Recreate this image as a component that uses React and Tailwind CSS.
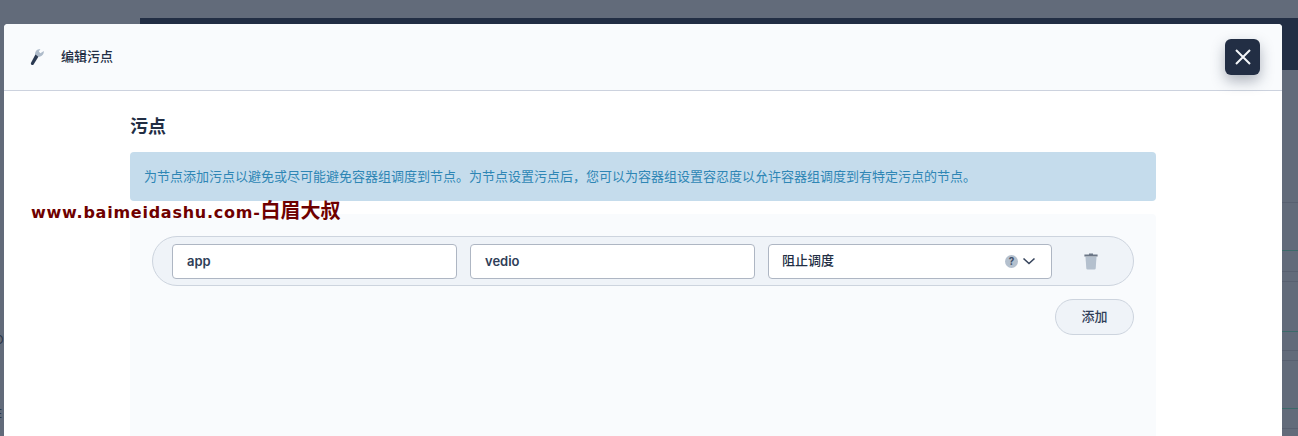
const WrenchIcon = () => (
  <svg width="16" height="20" viewBox="0 0 16 20">
    <path d="M6.2 8 C5.6 4.8 7.8 2 11.4 2 L9.8 4.6 L11.4 6.2 L14.8 4 C15.2 7.4 12.4 10.2 9 9.8 Z" fill="#aebbca" />
    <path d="M6.4 7.6 L9.4 9.8 L4.6 17.6 C3.6 18.8 1.4 17.8 1.9 16 Z" fill="#2b3a52" />
  </svg>
);

const TrashIcon = () => (
  <svg width="14" height="17" viewBox="0 0 14 17">
    <path d="M5 0.5 H9 V1.6 H13.6 V3.4 H0.4 V1.6 H5 Z" fill="#6b7686" />
    <path d="M1.5 4 H12.5 L11.7 15.4 C11.6 16.1 11.2 16.5 10.5 16.5 H3.5 C2.8 16.5 2.4 16.1 2.3 15.4 Z" fill="#b4c0ce" />
  </svg>
);

// the page under the dialog, only its right edge shows past the modal
const PageBehind = () => (
  <div className="flex flex-col pt-[18px]">
    <div className="ml-[140px] h-[52px] bg-[#222e44]" />
    <div className="ml-auto flex w-[16px] flex-col">
      <div className="h-[133px] border-b border-[#586070]" />
      <div className="h-[48px] border-b border-[#3d6a6a]" />
      <div className="h-[21px] border-b border-[#586070]" />
      <div className="h-[10px] border-b border-[#586070]" />
      <div className="h-[50px] border-b border-[#3d6a6a]" />
      <div className="h-[19px] border-b border-[#586070]" />
      <div className="h-[10px] border-b border-[#586070]" />
      <div className="h-[48px] border-b border-[#3d6a6a]" />
      <div className="h-[20px] border-b border-[#586070]" />
    </div>
  </div>
);

const TextBox = ({ value }) => (
  <div className="flex h-[35px] w-[285px] items-center rounded border border-[#aeb6c3] bg-white px-[14px] pt-[2px] text-[13px] font-semibold text-[#2f3e58]">
    {value}
  </div>
);

export default function App() {
  return (
    <div className="relative h-[436px] w-[1298px] overflow-hidden bg-[#626b7a]">
      <PageBehind />

      {/* modal */}
      <div className="absolute left-1 top-6 h-[412px] w-[1278px] rounded-t bg-white font-['Inter','Noto_Sans_CJK_SC',sans-serif]">
        <div className="flex h-[67px] items-center rounded-t border-b border-[#ccd2de] bg-[#f9fbfd] pl-[25px]">
          <WrenchIcon />
          <span className="ml-[16px] text-[13px] font-medium text-[#222e44]">编辑污点</span>
          <button className="ml-auto mr-[22px] flex h-[36px] w-[35px] items-center justify-center rounded-md bg-[#222e44] shadow-[0_6px_14px_rgba(34,46,68,0.35)]">
            <svg width="18" height="18" viewBox="0 0 18 18" fill="none" stroke="#f4f6f9" strokeWidth="2">
              <path d="M2 2 L16 16 M16 2 L2 16" />
            </svg>
          </button>
        </div>

        <div className="px-[126px]">
          <h2 className="mt-[24px] text-[18px] font-semibold leading-[24px] text-[#222e44]">污点</h2>
          <div className="mt-[13px] flex h-[49px] items-center rounded bg-[#c5dcec] px-[14px] text-[13px] text-[#2e86b5]">
            为节点添加污点以避免或尽可能避免容器组调度到节点。为节点设置污点后，您可以为容器组设置容忍度以允许容器组调度到有特定污点的节点。
          </div>

          <div className="mt-[13px] h-[240px] rounded bg-[#f9fbfd] px-[22px] pt-[22px]">
            <div className="flex h-[50px] items-center gap-[13px] rounded-full border border-[#cdd4de] bg-[#eff3f8] pl-[19px]">
              <TextBox value="app" />
              <TextBox value="vedio" />
              <div className="flex h-[35px] w-[284px] items-center rounded border border-[#aeb6c3] bg-white pl-[13px] pr-[15px] text-[13px] font-medium text-[#222e44]">
                阻止调度
                <span className="ml-auto flex h-[13px] w-[13px] items-center justify-center rounded-full bg-[#b4c0ce] text-[10px] font-bold leading-none text-[#40506a]">?</span>
                <svg className="ml-[4px]" width="14" height="14" viewBox="0 0 14 14" fill="none" stroke="#36445c" strokeWidth="1.6">
                  <path d="M1.5 4.5 L7 9.5 L12.5 4.5" />
                </svg>
              </div>
              <span className="ml-[19px] flex">
                <TrashIcon />
              </span>
            </div>
            <div className="mt-[13px] flex justify-end">
              <button className="h-[36px] w-[79px] rounded-full border border-[#cdd4de] bg-[#eff3f8] text-[13px] font-medium text-[#2f3e58]">
                添加
              </button>
            </div>
          </div>
        </div>
      </div>

      {/* scraps of the page behind, showing in the left gutter */}
      <span className="absolute left-[-5px] top-[331px] font-['Inter',sans-serif] text-[12px] text-[#2b3546]">D</span>
      <span className="absolute left-[-5px] top-[405px] font-['Inter',sans-serif] text-[12px] text-[#2b3546]">E</span>

      {/* watermark */}
      <div className="absolute left-[31px] top-[196px] flex items-baseline whitespace-nowrap font-['DejaVu_Sans','Noto_Sans_CJK_SC',sans-serif] font-bold text-[#6f0000]">
        <span className="text-[16px] tracking-[0.75px]">www.baimeidashu.com-</span>
        <span className="text-[20px] font-semibold">白眉大叔</span>
      </div>
    </div>
  );
}
